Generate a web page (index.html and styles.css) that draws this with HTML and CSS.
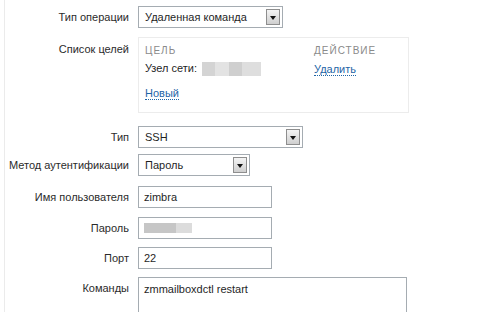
FILE: index.html
```html
<!DOCTYPE html>
<html lang="ru">
<head>
  <meta charset="UTF-8">
  <title>Операция</title>
  <link rel="stylesheet" href="styles.css">
</head>
<body>
  <div class="form">
    <div class="row row-op">
      <div class="label">Тип операции</div>
      <div class="select sel-op"><span class="value">Удаленная команда</span><span class="arrow"></span></div>
    </div>

    <div class="row row-targets">
      <div class="label">Список целей</div>
      <div class="targets">
        <div class="t-head">
          <span class="col-target">Цель</span>
          <span class="col-action">Действие</span>
        </div>
        <div class="t-row">
          <span class="col-target">Узел сети: <span class="blur blur-host"></span></span>
          <span class="col-action"><a class="link">Удалить</a></span>
        </div>
        <div class="t-new"><a class="link">Новый</a></div>
      </div>
    </div>

    <div class="row row-type">
      <div class="label">Тип</div>
      <div class="select sel-type"><span class="value">SSH</span><span class="arrow"></span></div>
    </div>

    <div class="row row-auth">
      <div class="label">Метод аутентификации</div>
      <div class="select sel-auth"><span class="value">Пароль</span><span class="arrow"></span></div>
    </div>

    <div class="row row-user">
      <div class="label">Имя пользователя</div>
      <div class="input">zimbra</div>
    </div>

    <div class="row">
      <div class="label">Пароль</div>
      <div class="input"><span class="blur blur-pass"></span></div>
    </div>

    <div class="row">
      <div class="label">Порт</div>
      <div class="input">22</div>
    </div>

    <div class="row row-cmd">
      <div class="label">Команды</div>
      <div class="textarea">zmmailboxdctl restart</div>
    </div>
  </div>
</body>
</html>
```

FILE: styles.css
```css
body {
  margin: 0;
  background: #fff;
  font-family: "Liberation Sans", Arial, sans-serif;
  font-size: 11px;
  color: #1f1f1f;
  overflow: hidden;
}
.form {
  margin-left: 4px;
  border-left: 1px solid #ebebeb;
  height: 312px;
  padding-top: 6px;
  box-sizing: border-box;
  overflow: hidden;
}
.row {
  display: flex;
  align-items: center;
  margin-bottom: 8px;
}
.label {
  width: 124px;
  padding-right: 9px;
  text-align: right;
  white-space: nowrap;
  color: #2b2b2b;
  flex-shrink: 0;
}
.row-op { margin-bottom: 9px; }
.row-targets {
  align-items: flex-start;
  margin-bottom: 13px;
}
.row-targets .label {
  padding-top: 6px;
}
.row-type { margin-bottom: 6px; }
.row-auth { margin-bottom: 10px; }
.row-user { margin-bottom: 9px; }

/* selects */
.select {
  height: 22px;
  box-sizing: border-box;
  border: 1px solid #a5acb2;
  background: #fff;
  display: flex;
  align-items: center;
  justify-content: space-between;
  padding: 0 2px 0 6px;
}
.sel-op { width: 145px; }
.sel-type { width: 165px; }
.sel-auth { width: 112px; }
.arrow {
  width: 14px;
  height: 16px;
  box-sizing: border-box;
  border: 1px solid #8e8e8e;
  background: linear-gradient(#f4f4f4, #cfcfcf);
  position: relative;
}
.arrow::after {
  content: "";
  position: absolute;
  left: 3px;
  top: 6px;
  border-left: 3px solid transparent;
  border-right: 3px solid transparent;
  border-top: 4px solid #111;
}

/* target list */
.targets {
  width: 271px;
  height: 76px;
  box-sizing: border-box;
  border: 1px solid #ececec;
  padding: 7px 6px 0;
}
.t-head, .t-row {
  display: flex;
}
.col-target {
  width: 169px;
}
.t-head {
  color: #8a8a8a;
  font-size: 10px;
  letter-spacing: 1px;
  text-transform: uppercase;
  margin-bottom: 6px;
}
.t-row {
  align-items: center;
  height: 14px;
}
.t-new {
  margin-top: 11px;
}
.link {
  color: #1f65a6;
  text-decoration: none;
  border-bottom: 1px dotted #1f65a6;
}
.blur {
  display: inline-block;
  vertical-align: middle;
}
.blur-host {
  width: 59px;
  height: 14px;
  margin-left: 2px;
  background: linear-gradient(90deg, #d4d4d4 0 22%, #e3e3e3 22% 45%, #cfcfcf 45% 68%, #dedede 68%);
}
.blur-pass {
  width: 48px;
  height: 10px;
  background: linear-gradient(90deg, #c6c6c6 0 66%, #dcdcdc 66%);
}

/* inputs */
.input {
  width: 134px;
  height: 22px;
  box-sizing: border-box;
  border: 1px solid #a5acb2;
  padding: 0 5px;
  display: flex;
  align-items: center;
}
.row-cmd {
  align-items: flex-start;
}
.row-cmd .label {
  padding-top: 5px;
}
.textarea {
  width: 269px;
  height: 60px;
  box-sizing: border-box;
  border: 1px solid #a5acb2;
  padding: 5px 5px;
}
```
